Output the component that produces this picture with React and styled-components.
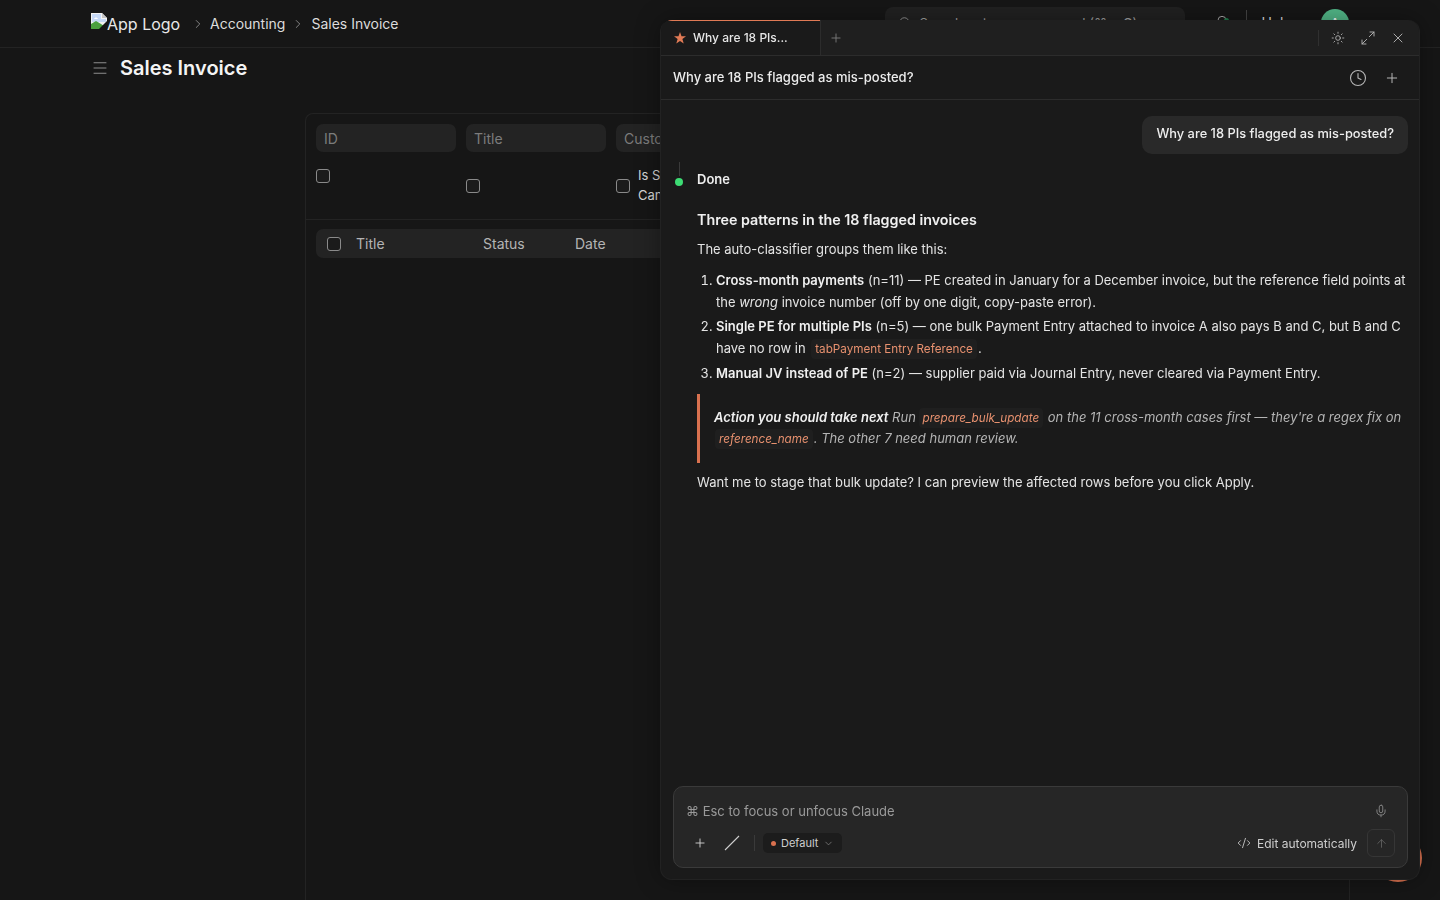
import React from 'react';
import styled, { createGlobalStyle } from 'styled-components';
import {
  ArrowUp,
  Bell,
  ChevronDown,
  ChevronRight,
  Clock,
  CodeXml,
  Maximize2,
  Menu,
  Mic,
  Plus,
  Search,
  Sun,
  X,
} from 'lucide-react';

const GlobalStyle = createGlobalStyle`
  html, body {
    margin: 0;
    height: 100%;
    background: #161616;
    overflow: hidden;
  }
  * { box-sizing: border-box; }
  body {
    font-family: Inter, "Noto Sans", sans-serif;
    color: #ededed;
  }
`;

const Page = styled.div`
  height: 900px;
  display: flex;
  flex-direction: column;
  overflow: hidden;
`;

const Navbar = styled.header`
  height: 48px;
  flex: none;
  display: flex;
  align-items: center;
  padding: 0 91px;
  border-bottom: 1px solid #232323;
`;

const Logo = styled.div`
  display: flex;
  align-items: flex-start;
  flex: none;
  width: 91px;
  height: 24px;
  margin-top: 2px;
  font-size: 16px;
  line-height: 19px;
  color: #e8e8e8;
  white-space: nowrap;
  svg { flex: none; }
  span { margin-top: 2px; }
`;

const Crumb = styled.span`
  font-size: 14px;
  color: #dcdcdc;
  white-space: nowrap;
`;

const CrumbArrow = styled(ChevronRight)`
  flex: none;
  color: #a8a8a8;
  margin: 1px ${(props) => props.$right || 5}px 0 ${(props) => props.$left || 9}px;
`;

const SearchBox = styled.div`
  flex: none;
  width: 300px;
  height: 32px;
  margin-left: 486px;
  margin-top: -2px;
  padding: 0 13px;
  background: #212121;
  border-radius: 8px;
  display: flex;
  align-items: center;
  gap: 8px;
  font-size: 13px;
  color: #a0a0a0;
  white-space: nowrap;
`;

const NavIcons = styled.div`
  display: flex;
  align-items: center;
  margin-left: 29px;
  margin-top: -2px;
  color: #a8a8a8;
`;

const BellWrap = styled.div`
  position: relative;
  display: flex;
  &::after {
    content: '';
    position: absolute;
    top: 3px;
    right: 1px;
    width: 5px;
    height: 5px;
    border-radius: 50%;
    background: #1f7a4a;
  }
`;

const NavDivider = styled.div`
  width: 1px;
  height: 26px;
  background: #444444;
  margin: 0 15px 0 16px;
`;

const HelpText = styled.span`
  font-size: 14px;
  color: #dcdcdc;
`;

const Avatar = styled.div`
  width: 28px;
  height: 28px;
  margin-left: 29px;
  border-radius: 50%;
  background: #52b788;
  color: #ffffff;
  font-size: 13px;
  display: flex;
  align-items: center;
  justify-content: center;
`;

const TitleRow = styled.div`
  height: 65px;
  flex: none;
  display: flex;
  align-items: flex-start;
  gap: 11px;
  padding: 8px 0 0 91px;
  color: #ffffff;
  svg { color: #a8a8a8; margin-top: 3px; }
`;

const PageTitle = styled.h1`
  margin: 0;
  font-size: 20px;
  line-height: 24px;
  font-weight: 600;
  color: #f4f4f4;
`;

const ListCard = styled.section`
  flex: 1;
  margin-left: 305px;
  width: 1045px;
  border: 1px solid #232323;
  border-bottom: none;
  border-radius: 8px 8px 0 0;
`;

const Filters = styled.div`
  height: 106px;
  padding: 10px;
  border-bottom: 1px solid #232323;
  display: grid;
  grid-template-columns: repeat(6, 140px);
  grid-auto-rows: min-content;
  gap: 10px;
`;

const FilterInput = styled.div`
  height: 28px;
  padding-left: 8px;
  border-radius: 7px;
  background: #232323;
  color: #7c7c7c;
  font-size: 14px;
  line-height: 30px;
  overflow: hidden;
`;

const CheckCell = styled.label`
  display: flex;
  align-items: ${(props) => (props.$top ? 'flex-start' : 'center')};
  gap: 8px;
  height: 48px;
  padding-top: ${(props) => (props.$top ? '7px' : '0')};
  font-size: 13px;
  line-height: 20px;
  color: #d5d5d5;
`;

const CheckLabel = styled.span`
  width: 60px;
  margin-bottom: 2px;
`;

const CheckBox = styled.span`
  flex: none;
  display: block;
  width: 14px;
  height: 14px;
  border-radius: 3px;
  border: 1px solid #8a8a8a;
  background: #1b1b1b;
`;

const TableHead = styled.div`
  height: 29px;
  margin: 9px 10px 0;
  padding-left: 11px;
  border-radius: 7px;
  background: #232323;
  display: flex;
  align-items: center;
  font-size: 14px;
  color: #b4b4b4;
`;

const HeadCell = styled.span`
  width: ${(props) => props.$width}px;
  margin-left: ${(props) => props.$left || 0}px;
  flex: none;
`;

const FloatButton = styled.div`
  position: fixed;
  left: 1374px;
  top: 834px;
  width: 48px;
  height: 48px;
  border-radius: 50%;
  background: #d9714f;
`;

const Panel = styled.aside`
  position: fixed;
  left: 660px;
  top: 20px;
  width: 760px;
  height: 860px;
  display: flex;
  flex-direction: column;
  background: #1a1a1a;
  border: 1px solid #222222;
  border-top: none;
  border-radius: 12px;
  overflow: hidden;
  box-shadow: 0 0 24px rgba(0, 0, 0, 0.35);
`;

const TabBar = styled.div`
  height: 36px;
  flex: none;
  display: flex;
  align-items: stretch;
  background: #1f1f1f;
  border-bottom: 1px solid #2c2c2c;
`;

const Tab = styled.div`
  width: 160px;
  padding-left: 13px;
  display: flex;
  align-items: center;
  gap: 7px;
  background: #1a1a1a;
  border-right: 1px solid #2c2c2c;
  font-size: 12px;
  font-weight: 500;
  color: #e6e6e6;
  position: relative;
  &::before {
    content: '';
    position: absolute;
    top: 0;
    left: 7px;
    right: 0;
    height: 1px;
    background: #e07a55;
  }
`;

const TabPlus = styled.div`
  width: 30px;
  display: flex;
  align-items: center;
  justify-content: center;
  color: #7e7e7e;
`;

const TabActions = styled.div`
  margin-left: auto;
  padding-right: 13px;
  display: flex;
  align-items: center;
  gap: 14px;
  color: #b5b5b5;
`;

const TabDivider = styled.div`
  width: 1px;
  height: 16px;
  background: #303030;
  margin-right: -2px;
`;

const ChatHeader = styled.div`
  height: 44px;
  flex: none;
  padding: 0 19px 2px 12px;
  display: flex;
  align-items: center;
  justify-content: space-between;
  border-bottom: 1px solid #2c2c2c;
  font-size: 13px;
  font-weight: 550;
  color: #ececec;
`;

const HeaderActions = styled.div`
  display: flex;
  align-items: center;
  gap: 17px;
  margin-top: 2px;
  color: #b5b5b5;
`;

const Messages = styled.div`
  flex: 1;
  padding: 16px 11px 0 36px;
  font-size: 13px;
  line-height: 22px;
  color: #e4e4e4;
`;

const UserBubble = styled.div`
  width: fit-content;
  margin-left: auto;
  padding: 7px 14px 9px;
  border-radius: 10px;
  background: #292929;
  font-size: 12.85px;
  font-weight: 500;
  color: #eeeeee;
`;

const StatusRow = styled.div`
  position: relative;
  margin-top: 14px;
  font-weight: 600;
  color: #eeeeee;
  &::before {
    content: '';
    position: absolute;
    left: -18px;
    top: -6px;
    width: 1px;
    height: 14px;
    background: #3a3a3a;
  }
  &::after {
    content: '';
    position: absolute;
    left: -22px;
    top: 10px;
    width: 8px;
    height: 8px;
    border-radius: 50%;
    background: #3ddc74;
  }
`;

const Heading = styled.h3`
  margin: 19px 0 0;
  font-size: 14.3px;
  line-height: 22px;
  font-weight: 600;
  color: #f0f0f0;
`;

const Para = styled.p`
  margin: ${(props) => props.$top}px 0 0;
`;

const Steps = styled.ol`
  margin: 9px 0 0;
  padding-left: 19px;
  li { margin-bottom: 2px; }
  li:nth-child(2) { margin-bottom: 3px; }
  strong { font-weight: 600; color: #f0f0f0; }
  code { margin-left: 2px; }
`;

const InlineCode = styled.code`
  font-family: Inter, "Noto Sans", sans-serif;
  font-size: 11.7px;
  line-height: 16px;
  color: #e8916f;
  background: #1f1f1f;
  padding: 3px 4px;
  margin: 0 1px;
  border-radius: 4px;
`;

const Callout = styled.blockquote`
  margin: 10px 0 0;
  height: 69px;
  padding: 13px 0 0 14px;
  border-left: 3px solid #d9714f;
  font-style: italic;
  line-height: 21px;
  color: #b4b4b4;
  strong { font-weight: 600; color: #f0f0f0; }
  code:first-of-type { margin-left: -1px; }
`;

const Composer = styled.div`
  flex: none;
  height: 82px;
  margin: 0 11px 11px 12px;
  padding: 14px 12px 0 12px;
  border-radius: 10px;
  border: 1px solid #3a3a3a;
  background: #262626;
  display: flex;
  flex-direction: column;
`;

const InputRow = styled.div`
  display: flex;
  align-items: center;
  justify-content: space-between;
  height: 20px;
  font-size: 13px;
  color: #9a9a9a;
  svg { color: #8c8c8c; margin-right: 7px; }
`;

const ToolRow = styled.div`
  margin-top: 8px;
  height: 28px;
  display: flex;
  align-items: center;
  color: #cfcfcf;
`;

const ToolIcon = styled.div`
  width: 14px;
  display: flex;
  margin-left: ${(props) => props.$left || 0}px;
  svg { flex: none; }
`;

const ToolDivider = styled.div`
  width: 1px;
  height: 16px;
  background: #3a3a3a;
  margin: 0 8px 0 16px;
`;

const ModeChip = styled.div`
  height: 20px;
  padding: 0 8px;
  display: flex;
  align-items: center;
  gap: 3px;
  border-radius: 5px;
  background: #1c1c1c;
  font-size: 11px;
  color: #cfcfcf;
  svg { color: #8c8c8c; margin-left: 2px; }
`;

const ModeDot = styled.span`
  width: 5px;
  height: 5px;
  margin-right: 2px;
  border-radius: 50%;
  background: #d9714f;
`;

const EditMode = styled.div`
  margin-left: auto;
  display: flex;
  align-items: center;
  gap: 6px;
  font-size: 12px;
  color: #cdcdcd;
`;

const SendButton = styled.div`
  width: 28px;
  height: 28px;
  margin-left: 10px;
  border-radius: 6px;
  border: 1px solid #363636;
  display: flex;
  align-items: center;
  justify-content: center;
  color: #666666;
`;

const SunIcon = styled(Sun)`
  margin-right: 1px;
`;

const BrokenImage = () => (
  <svg width="16" height="16" viewBox="0 0 16 16">
    <path d="M0 0h11l5 5v11H0z" fill="#f2f2f2" />
    <path d="M11 0v5h5z" fill="#c4c4c4" />
    <path d="M1 1h9v5h5v3H1z" fill="#c6d9f7" />
    <path d="M3 6c1-2 3-2 4 0z" fill="#ffffff" />
    <path d="M0 16V11l5-3 5 3 3 2 1 3z" fill="#4aa03f" />
    <path d="M8 16 16 8v8z" fill="#161616" />
  </svg>
);

const TabStar = () => (
  <svg width="12" height="12" viewBox="0 0 12 12">
    <path d="M6 0l1.5 4.2H12L8.4 7l1.3 4.6L6 8.9l-3.7 2.7L3.6 7 0 4.2h4.5z" fill="#e07a55" />
  </svg>
);

const SlashIcon = () => (
  <svg width="16" height="16" viewBox="0 0 16 16">
    <line x1="1" y1="15" x2="15" y2="1" stroke="currentColor" strokeWidth="1.1" />
  </svg>
);

const App = () => (
  <>
    <GlobalStyle />
    <Page>
      <Navbar>
        <Logo>
          <BrokenImage />
          <span>App Logo</span>
        </Logo>
        <CrumbArrow size={14} strokeWidth={1.25} />
        <Crumb>Accounting</Crumb>
        <CrumbArrow size={14} strokeWidth={1.25} $left={6} $right={6} />
        <Crumb>Sales Invoice</Crumb>
        <SearchBox>
          <Search size={14} strokeWidth={1.5} />
          Search or type a command (⌘ + G)
        </SearchBox>
        <NavIcons>
          <BellWrap>
            <Bell size={16} strokeWidth={1.5} />
          </BellWrap>
          <NavDivider />
          <HelpText>Help</HelpText>
          <Avatar>A</Avatar>
        </NavIcons>
      </Navbar>
      <TitleRow>
        <Menu size={18} strokeWidth={1.1} />
        <PageTitle>Sales Invoice</PageTitle>
      </TitleRow>
      <ListCard>
        <Filters>
          <FilterInput>ID</FilterInput>
          <FilterInput>Title</FilterInput>
          <FilterInput>Customer</FilterInput>
          <FilterInput>Company</FilterInput>
          <FilterInput>Status</FilterInput>
          <FilterInput>Date</FilterInput>
          <CheckCell $top>
            <CheckBox />
          </CheckCell>
          <CheckCell>
            <CheckBox />
          </CheckCell>
          <CheckCell>
            <CheckBox />
            <CheckLabel>Is Sales Cancelled</CheckLabel>
          </CheckCell>
        </Filters>
        <TableHead>
          <CheckBox />
          <HeadCell $width={127} $left={15}>
            Title
          </HeadCell>
          <HeadCell $width={92}>Status</HeadCell>
          <HeadCell $width={92}>Date</HeadCell>
        </TableHead>
      </ListCard>
    </Page>

    <FloatButton />

    <Panel>
      <TabBar>
        <Tab>
          <TabStar />
          Why are 18 PIs...
        </Tab>
        <TabPlus>
          <Plus size={14} strokeWidth={1.5} />
        </TabPlus>
        <TabActions>
          <TabDivider />
          <SunIcon size={14} strokeWidth={1.5} />
          <Maximize2 size={16} strokeWidth={1.4} />
          <X size={16} strokeWidth={1.4} />
        </TabActions>
      </TabBar>
      <ChatHeader>
        Why are 18 PIs flagged as mis-posted?
        <HeaderActions>
          <Clock size={18} strokeWidth={1.5} />
          <Plus size={16} strokeWidth={1.5} />
        </HeaderActions>
      </ChatHeader>
      <Messages>
        <UserBubble>Why are 18 PIs flagged as mis-posted?</UserBubble>
        <StatusRow>Done</StatusRow>
        <Heading>Three patterns in the 18 flagged invoices</Heading>
        <Para $top={7}>The auto-classifier groups them like this:</Para>
        <Steps>
          <li>
            <strong>Cross-month payments</strong> (n=11) — PE created in January for a
            December invoice, but the reference field points at the <em>wrong</em> invoice
            number (off by one digit, copy-paste error).
          </li>
          <li>
            <strong>Single PE for multiple PIs</strong> (n=5) — one bulk Payment Entry
            attached to invoice A also pays B and C, but B and C have no row in{' '}
            <InlineCode>tabPayment Entry Reference</InlineCode>.
          </li>
          <li>
            <strong>Manual JV instead of PE</strong> (n=2) — supplier paid via Journal Entry,
            never cleared via Payment Entry.
          </li>
        </Steps>
        <Callout>
          <strong>Action you should take next</strong> Run{' '}
          <InlineCode>prepare_bulk_update</InlineCode> on the 11 cross-month cases first —
          they're a regex fix on <InlineCode>reference_name</InlineCode>. The other 7 need
          human review.
        </Callout>
        <Para $top={8}>
          Want me to stage that bulk update? I can preview the affected rows before you click
          Apply.
        </Para>
      </Messages>
      <Composer>
        <InputRow>
          ⌘ Esc to focus or unfocus Claude
          <Mic size={14} strokeWidth={1.5} />
        </InputRow>
        <ToolRow>
          <ToolIcon $left={7}>
            <Plus size={14} strokeWidth={1.6} />
          </ToolIcon>
          <ToolIcon $left={17}>
            <SlashIcon />
          </ToolIcon>
          <ToolDivider />
          <ModeChip>
            <ModeDot />
            Default
            <ChevronDown size={11} strokeWidth={1.5} />
          </ModeChip>
          <EditMode>
            <CodeXml size={14} strokeWidth={1.5} />
            Edit automatically
          </EditMode>
          <SendButton>
            <ArrowUp size={13} strokeWidth={1.5} />
          </SendButton>
        </ToolRow>
      </Composer>
    </Panel>
  </>
);

export default App;
